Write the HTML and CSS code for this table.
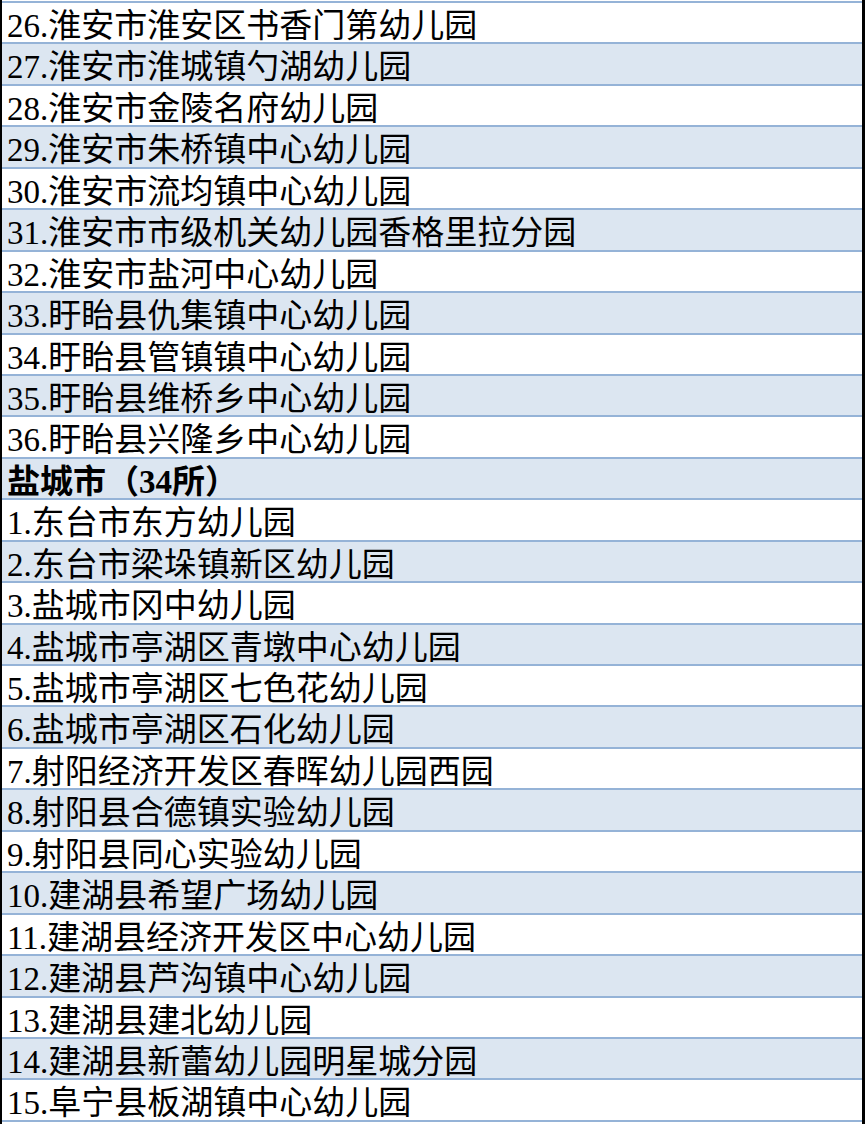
FILE: index.html
```html
<!DOCTYPE html>
<html lang="zh-CN">
<head>
<meta charset="utf-8">
<title>幼儿园名单</title>
<link rel="stylesheet" href="styles.css">
</head>
<body>
<div class="sheet">
  <div class="row">26.淮安市淮安区书香门第幼儿园</div>
  <div class="row alt">27.淮安市淮城镇勺湖幼儿园</div>
  <div class="row">28.淮安市金陵名府幼儿园</div>
  <div class="row alt">29.淮安市朱桥镇中心幼儿园</div>
  <div class="row">30.淮安市流均镇中心幼儿园</div>
  <div class="row alt">31.淮安市市级机关幼儿园香格里拉分园</div>
  <div class="row">32.淮安市盐河中心幼儿园</div>
  <div class="row alt">33.盱眙县仇集镇中心幼儿园</div>
  <div class="row">34.盱眙县管镇镇中心幼儿园</div>
  <div class="row alt">35.盱眙县维桥乡中心幼儿园</div>
  <div class="row">36.盱眙县兴隆乡中心幼儿园</div>
  <div class="row alt head">盐城市（34所）</div>
  <div class="row">1.东台市东方幼儿园</div>
  <div class="row alt">2.东台市梁垛镇新区幼儿园</div>
  <div class="row">3.盐城市冈中幼儿园</div>
  <div class="row alt">4.盐城市亭湖区青墩中心幼儿园</div>
  <div class="row">5.盐城市亭湖区七色花幼儿园</div>
  <div class="row alt">6.盐城市亭湖区石化幼儿园</div>
  <div class="row">7.射阳经济开发区春晖幼儿园西园</div>
  <div class="row alt">8.射阳县合德镇实验幼儿园</div>
  <div class="row">9.射阳县同心实验幼儿园</div>
  <div class="row alt">10.建湖县希望广场幼儿园</div>
  <div class="row">11.建湖县经济开发区中心幼儿园</div>
  <div class="row alt">12.建湖县芦沟镇中心幼儿园</div>
  <div class="row">13.建湖县建北幼儿园</div>
  <div class="row alt">14.建湖县新蕾幼儿园明星城分园</div>
  <div class="row last">15.阜宁县板湖镇中心幼儿园</div>
</div>
</body>
</html>
```

FILE: styles.css
```css
html, body {
  margin: 0;
  padding: 0;
  background: #ffffff;
}

.sheet {
  width: 860px;
  height: 1123px;
  border-left: 2px solid #000000;
  border-right: 3px solid #000000;
  padding-top: 1px;
  overflow: hidden;
}

.row {
  height: 36.45px;
  padding-top: 3px;
  border-top: 2px solid #95b3d7;
  padding-left: 5px;
  font-family: "Liberation Serif", "Noto Sans CJK SC", serif;
  font-size: 33px;
  line-height: 40px;
  color: #000000;
  white-space: nowrap;
  background: #ffffff;
  overflow: visible;
}

.row.alt {
  background: #dce6f1;
}

.row.head {
  font-weight: bold;
}

.row.last {
  border-bottom: 2px solid #95b3d7;
}
```
